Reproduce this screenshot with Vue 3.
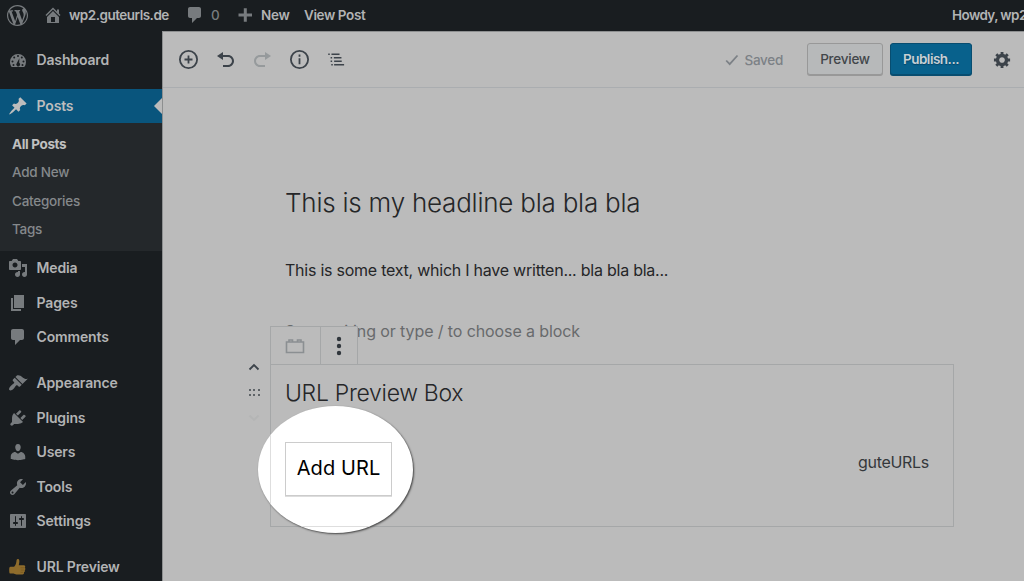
<script setup>
const paths = {
  wp: 'M20 10c0-5.51-4.49-10-10-10C4.48 0 0 4.49 0 10c0 5.52 4.48 10 10 10 5.51 0 10-4.48 10-10zM7.78 15.37L4.37 6.22c.55-.02 1.17-.08 1.17-.08.5-.06.44-1.13-.06-1.11 0 0-1.45.11-2.37.11-.18 0-.37 0-.58-.01C4.12 2.69 6.87 1.11 10 1.11c2.33 0 4.45.87 6.05 2.34-.68-.11-1.65.39-1.65 1.58 0 .74.45 1.36.9 2.1.35.61.55 1.36.55 2.46 0 1.49-1.4 5-1.4 5l-3.03-8.37c.54-.02.82-.17.82-.17.5-.05.44-1.25-.06-1.22 0 0-1.44.12-2.38.12-.87 0-2.33-.12-2.33-.12-.5-.03-.56 1.2-.06 1.22l.92.08 1.26 3.41zM17.41 10c.24-.64.74-1.87.43-4.25.7 1.29 1.05 2.71 1.05 4.25 0 3.29-1.73 6.24-4.4 7.78.97-2.59 1.94-5.2 2.92-7.78zM6.1 18.09C3.12 16.65 1.11 13.53 1.11 10c0-1.3.23-2.48.72-3.59C3.25 10.3 4.67 14.2 6.1 18.09zm4.03-6.63l2.58 6.98c-.86.29-1.76.45-2.71.45-.79 0-1.57-.11-2.29-.33.81-2.38 1.62-4.74 2.42-7.1z',
  home: 'M16 8.5l1.53 1.53-1.06 1.06L10 4.6l-6.47 6.49-1.06-1.06L10 2.5l4 4v-2h2v4zm-6-2.46l6 5.99V18H4v-5.97zM12 17v-5H8v5h4z',
  comments: 'M5 2h9c1.1 0 2 .9 2 2v7c0 1.1-.9 2-2 2h-2l-5 5v-5H5c-1.1 0-2-.9-2-2V4c0-1.1.9-2 2-2z',
  plus: 'M17 8.5v3h-5.2v5.2h-3v-5.2H3.500v-3h5.300V3.300h3v5.200z',
  dashboard: 'M3.76 17h12.48A7.950 7.950 0 0 0 18 12a8 8 0 1 0-16 0c0 1.890.660 3.630 1.760 5zM10 5a1 1 0 1 1 0 2 1 1 0 0 1 0-2zM6.200 6.500a1 1 0 1 1 0 2 1 1 0 0 1 0-2zM13.800 6.500a1 1 0 1 1 0 2 1 1 0 0 1 0-2zM4.500 10.500a1 1 0 1 1 0 2 1 1 0 0 1 0-2zM15.500 10.500a1 1 0 1 1 0 2 1 1 0 0 1 0-2zM11.400 8.200l-.2 4.600a1.900 1.900 0 1 1-2.300.3zM5.500 14a1 1 0 1 1 0 2 1 1 0 0 1 0-2zM14.500 14a1 1 0 1 1 0 2 1 1 0 0 1 0-2z',
  posts: 'M10.44 3.02l1.82-1.82 6.36 6.35-1.83 1.82c-1.05-.68-2.48-.57-3.41.36l-.75.75c-.92.93-1.04 2.35-.35 3.41l-1.83 1.82-2.41-2.41-2.8 2.79c-.42.42-3.38 2.71-3.8 2.29s1.86-3.39 2.28-3.81l2.79-2.79L4.1 9.36l1.83-1.82c1.05.69 2.48.57 3.4-.36l.75-.75c.93-.92 1.05-2.35.36-3.41z',
  media: 'M13 11V4c0-.55-.45-1-1-1h-1.67L9 1H5L3.67 3H2c-.55 0-1 .45-1 1v7c0 .55.45 1 1 1h10c.55 0 1-.45 1-1zM7 4.5c1.38 0 2.5 1.12 2.5 2.5S8.380 9.500 7 9.500 4.500 8.380 4.500 7 5.620 4.500 7 4.500zM14 6h5v10.500c0 1.380-1.120 2.500-2.500 2.500S14 17.880 14 16.500s1.120-2.500 2.500-2.500c.17 0 .34.02.5.05V9h-3V6zm-4 8.05V13h2v3.500c0 1.380-1.120 2.500-2.500 2.500S7 17.880 7 16.500 8.120 14 9.500 14c.17 0 .34.02.5.05z',
  pages: 'M6 15V2h10v13H6zm-1 1h8v2H3V5h2v11z',
  appearance: 'M14.48 11.06L7.41 3.99l1.5-1.5c.5-.56 2.3-.47 3.51.32 1.21.8 1.43 1.28 2.91 2.1 1.18.64 2.45 1.26 4.45.85zm-.71.71L6.7 4.7 4.93 6.47c-.39.39-.39 1.02 0 1.41l1.06 1.06c.39.39.39 1.03 0 1.42-.6.6-1.43 1.11-2.21 1.69-.35.26-.7.53-1.01.84C1.43 14.23.4 16.08 1.4 17.07c.99 1 2.84-.03 4.18-1.36.31-.31.58-.66.85-1.02.57-.78 1.08-1.61 1.69-2.21.39-.39 1.02-.39 1.41 0l1.06 1.06c.39.39 1.02.39 1.41 0z',
  plugins: 'M13.11 4.36L9.87 7.6 8 5.73l3.24-3.24c.35-.34 1.05-.2 1.56.32.52.51.66 1.21.31 1.55zm-8 1.77l.91-1.12 9.01 9.01-1.19.84c-.71.71-2.63 1.16-3.82 1.16H6.14L4.9 17.26c-.59.59-1.54.59-2.12 0-.59-.58-.59-1.53 0-2.12l1.24-1.24v-3.88c0-1.13.4-3.19 1.09-3.89zm7.26 3.97l3.24-3.24c.34-.35 1.04-.21 1.55.31.52.51.66 1.21.31 1.55l-3.24 3.25z',
  users: 'M10 9.25c-2.27 0-2.73-3.44-2.73-3.44C7 4.02 7.82 2 9.97 2c2.16 0 2.98 2.02 2.71 3.81 0 0-.41 3.44-2.68 3.44zm0 2.57L12.72 10c2.39 0 4.52 2.33 4.52 4.53v2.49s-3.65 1.13-7.24 1.13c-3.65 0-7.24-1.13-7.24-1.13v-2.49c0-2.25 1.94-4.48 4.47-4.48z',
  tools: 'M16.68 9.77c-1.34 1.34-3.3 1.67-4.95.99l-5.41 6.52c-.99.99-2.59.99-3.58 0s-.99-2.59 0-3.57l6.52-5.42c-.68-1.65-.35-3.61.99-4.95 1.28-1.28 3.12-1.62 4.72-1.06l-2.89 2.89 2.82 2.82 2.86-2.87c.53 1.58.18 3.39-1.08 4.65zM3.81 16.21c.4.39 1.04.39 1.43 0 .4-.4.4-1.04 0-1.43-.39-.4-1.03-.4-1.43 0-.39.39-.39 1.03 0 1.43z',
  settings: 'M18 16V4c0-.55-.45-1-1-1H3c-.55 0-1 .45-1 1v12c0 .55.45 1 1 1h14c.55 0 1-.45 1-1zM8 11h1c.55 0 1 .45 1 1s-.45 1-1 1H8v1.5c0 .28-.22.5-.5.5s-.5-.22-.5-.5V13H6c-.55 0-1-.45-1-1s.45-1 1-1h1V5.5c0-.28.22-.5.5-.5s.5.22.5.5V11zm5-2h-1c-.55 0-1-.45-1-1s.45-1 1-1h1V5.5c0-.28.22-.5.5-.5s.5.22.5.5V7h1c.55 0 1 .45 1 1s-.45 1-1 1h-1v5.5c0 .28-.22.5-.5.5s-.5-.22-.5-.5V9z',
  gear: 'M18 12h-2.18c-.17.7-.44 1.35-.81 1.93l1.54 1.54-2.1 2.1-1.54-1.54c-.58.36-1.23.63-1.91.79V19H8v-2.18c-.68-.16-1.33-.43-1.91-.79l-1.54 1.54-2.12-2.12 1.54-1.54c-.36-.58-.63-1.23-.79-1.91H1V9.03h2.17c.16-.7.44-1.35.8-1.94L2.43 5.55l2.1-2.1 1.54 1.54c.58-.37 1.24-.64 1.93-.81V2h3v2.18c.68.16 1.33.43 1.91.79l1.54-1.54 2.12 2.12-1.54 1.54c.36.59.64 1.24.8 1.94H18V12zm-8.5 1.5c1.66 0 3-1.34 3-3s-1.34-3-3-3-3 1.34-3 3 1.34 3 3 3z',
  undo: 'M12 5H7V2L1 6l6 4V7h5c2.2 0 4 1.8 4 4s-1.8 4-4 4H7v2h5c3.3 0 6-2.7 6-6s-2.7-6-6-6z',
  redo: 'M8 5h5V2l6 4-6 4V7H8c-2.2 0-4 1.8-4 4s1.8 4 4 4h5v2H8c-3.3 0-6-2.7-6-6s2.7-6 6-6z'
}
const subItems = ['All Posts', 'Add New', 'Categories', 'Tags']
const groups = [
  [['media', 'Media'], ['pages', 'Pages'], ['comments', 'Comments']],
  [['appearance', 'Appearance'], ['plugins', 'Plugins'], ['users', 'Users'], ['tools', 'Tools'], ['settings', 'Settings']]
]
</script>

<template>
  <div class="screen">
    <header class="adminbar">
      <svg class="ico wp" viewBox="0 0 20 20"><path :d="paths.wp" /></svg>
      <svg class="ico home" viewBox="0 0 20 20"><path :d="paths.home" /></svg>
      <span class="site">wp2.guteurls.de</span>
      <svg class="ico bubble" viewBox="0 0 20 20"><path :d="paths.comments" /></svg>
      <span class="count">0</span>
      <svg class="ico add" viewBox="0 0 20 20"><path :d="paths.plus" /></svg>
      <span class="new">New</span>
      <span class="view">View Post</span>
      <span class="howdy">Howdy, wp2</span>
    </header>

    <div class="body">
      <nav class="sidebar">
        <div class="item first">
          <svg class="ico" viewBox="0 0 20 20"><path fill-rule="evenodd" :d="paths.dashboard" /></svg>
          <span>Dashboard</span>
        </div>
        <div class="item current">
          <svg class="ico" viewBox="0 0 20 20"><path :d="paths.posts" /></svg>
          <span>Posts</span>
        </div>
        <div class="submenu">
          <span v-for="(s, i) in subItems" :key="s" :class="{ on: i === 0 }">{{ s }}</span>
        </div>
        <div v-for="(g, i) in groups" :key="i" class="group">
          <div v-for="m in g" :key="m[1]" class="item">
            <svg class="ico" viewBox="0 0 20 20"><path fill-rule="evenodd" :d="paths[m[0]]" /></svg>
            <span>{{ m[1] }}</span>
          </div>
        </div>
        <div class="item">
          <svg class="ico thumb" viewBox="0 0 20 20">
            <path d="M2.500 9.800h3.600c2-1.600 2.100-4.200 2.500-6.700.3-1.600 2.400-1.300 2.700.4.300 1.800-.4 3.300-.5 4.700h4.900c1.700 0 2 2 1 2.500 1 .6.900 2-.1 2.400.7.800.4 1.900-.6 2.200.3 1.200-.3 2.200-1.600 2.200H8.500c-1.300 0-2.200-.5-3-.9h-3c-1 0-1.300-.9-1.300-3.400s.3-3.400 1.300-3.400z" />
            <path class="crease" d="M12.500 10.800h3.800M12.700 13.100h3.300M12.500 15.300h2.800" />
          </svg>
          <span>URL Preview</span>
        </div>
      </nav>

      <main class="editor">
        <div class="toolbar">
          <svg class="tool t-insert" viewBox="0 0 20 20"><circle cx="10" cy="10" r="8.200" /><path d="M10 6.200v7.600M6.200 10h7.600" /></svg>
          <svg class="ico tfill" viewBox="0 0 20 20"><path :d="paths.undo" /></svg>
          <svg class="ico tfill faded" viewBox="0 0 20 20"><path :d="paths.redo" /></svg>
          <svg class="tool t-info" viewBox="0 0 20 20"><circle cx="10" cy="10" r="8.200" /><path d="M10 8.800v5.700M10 5.300v2" /></svg>
          <svg class="tool t-list" viewBox="0 0 20 20"><path d="M4.700 4.500h8.500M7.200 8.200h8M7.500 11.900h8M7.500 15.500H18M1.300 4.500h1.600M3.800 8.200h1.600M3.800 11.900h1.600M4.500 15.500h1.600" /></svg>
          <div class="saved">
            <svg viewBox="0 0 14 12"><path d="M1.200 6.500l3.500 3.700L12.500 1.500" /></svg>
            <span>Saved</span>
          </div>
          <button class="btn preview">Preview</button>
          <button class="btn publish">Publish...</button>
          <svg class="ico gear" viewBox="0 0 20 20"><path :d="paths.gear" /></svg>
        </div>

        <div class="content">
          <h1><span>This is my headline bla bla bla</span></h1>
          <p class="para"><span>This is some text, which I have written... bla bla bla...</span></p>
          <p class="hint"><span>Start writing or type / to choose a block</span></p>

          <section class="block">
            <div class="block-tools">
              <div class="cell brick">
                <svg viewBox="0 0 20 16"><path d="M1.500 4h17v10.500h-17zM4 4V2h3.500v2M12.500 4V2H16v2" /></svg>
              </div>
              <div class="cell">
                <svg class="dots" viewBox="0 0 6 20"><circle cx="3" cy="3" r="2.200" /><circle cx="3" cy="10" r="2.200" /><circle cx="3" cy="17" r="2.200" /></svg>
              </div>
            </div>
            <div class="mover">
              <svg class="chev" viewBox="0 0 12 8"><path d="M1.500 6.500L6 2l4.500 4.500" /></svg>
              <div class="grip"><i v-for="n in 6" :key="n" /></div>
              <svg class="chev down" viewBox="0 0 12 8"><path d="M1.500 1.500L6 6l4.500-4.500" /></svg>
            </div>
            <h2><span>URL Preview Box</span></h2>
            <span class="brand">guteURLs</span>
            <div class="spotlight">
              <div class="edge"></div>
              <button class="addurl"><span>Add URL</span></button>
            </div>
          </section>
        </div>
      </main>
    </div>
  </div>
</template>

<style>
html, body { margin: 0; overflow: hidden; }
</style>

<style scoped>
* { box-sizing: border-box; }
.screen { width: 1024px; height: 581px; overflow: hidden; background: #bbb; font-family: Inter, "Liberation Sans", sans-serif; }
.ico { width: 20px; height: 20px; flex: none; fill: #777b7e; }
.adminbar { height: 31px; background: #191d20; display: flex; align-items: center; color: #b2b3b4; font-size: 13.500px; font-weight: 600; white-space: nowrap; }
.adminbar span { line-height: 30px; height: 31px; }
.wp { width: 21px; height: 21px; margin-left: 7px; margin-top: -1px; }
.home { margin-left: 15px; margin-top: -1px; }
.site { width: 101px; margin-left: 6px; letter-spacing: -.5px; }
.bubble { margin-left: 15px; margin-top: -1px; }
.adminbar .count { margin-left: 6px; width: 9px; color: #777b7e; font-weight: 500; }
.add { margin-left: 15px; margin-top: -1px; }
.new { width: 28px; margin-left: 6px; letter-spacing: -.3px; }
.view { margin-left: 15px; letter-spacing: -.4px; }
.howdy { margin-left: auto; width: 72px; letter-spacing: -.6px; }
.body { display: flex; height: 550px; }
.sidebar { width: 162px; flex: none; background: #191d20; display: flex; flex-direction: column; }
.item { height: 34.500px; flex: none; display: flex; align-items: center; padding-left: 8px; gap: 8.500px; color: #b2b3b4; font-size: 14px; font-weight: 600; letter-spacing: -.15px; white-space: nowrap; }
.item span { position: relative; top: -.600px; }
.item.first { margin-top: 12px; margin-bottom: 11.500px; }
.item.current { height: 34px; background: #09557d; color: #bdbdbd; position: relative; }
.item.current .ico { fill: #bdbdbd; }
.item.current::after { content: ""; position: absolute; right: 0; top: 9px; border: 8px solid transparent; border-left-width: 0; border-right-color: #bbb; }
.submenu { height: 128px; flex: none; background: #24282b; padding: 7px 0 0 12px; display: flex; flex-direction: column; }
.submenu span { height: 28.250px; line-height: 28.250px; font-size: 13.500px; font-weight: 500; color: #85898c; letter-spacing: -.25px; }
.submenu .on { font-weight: 700; color: #c0c0c0; letter-spacing: -.35px; }
.group { margin-bottom: 11.500px; }
.thumb { fill: #8e6c2c; }
.crease { fill: none; stroke: #6e5019; stroke-width: .6; }
.editor { flex: 1; min-width: 0; background: #bbb; border-left: 1px solid #8d8f90; border-top: 1px solid #8d8f90; }
.toolbar { height: 56px; border-bottom: 1px solid #aaadb0; display: flex; align-items: center; padding-left: 15px; }
.tool { fill: none; stroke: #3c434a; stroke-width: 1.700; flex: none; }
.tfill { fill: #3c434a; margin-left: 17px; }
.t-insert { width: 21px; height: 21px; }
.tfill.faded { fill: #969a9c; margin-left: 16px; }
.t-info { width: 21px; height: 21px; margin-left: 16.500px; }
.t-list { width: 19px; height: 19px; margin-left: 17px; stroke-width: 1.500; }
.saved { margin-left: auto; display: flex; align-items: center; gap: 6px; color: #7c8186; font-size: 13.500px; font-weight: 500; margin-right: 24px; letter-spacing: -.3px; }
.saved svg { width: 14px; height: 12px; fill: none; stroke: #7c8186; stroke-width: 1.800; }
.btn { height: 32px; margin-top: -1px; border-radius: 3px; font-family: inherit; font-size: 13.500px; padding: 0; letter-spacing: -.25px; flex: none; }
.preview { width: 76px; border: 1px solid #989898; background: #b7b9ba; color: #42464a; font-weight: 500; box-shadow: 0 1px 0 #989898; margin-right: 7px; }
.publish { width: 82px; border: 1px solid #084d70; background: #08618c; color: #c8d0d4; font-weight: 600; box-shadow: 0 1px 0 #084d70; text-shadow: 0 1px 1px #064467; letter-spacing: -.5px; }
.gear { margin: 0 12px 0 21px; width: 19px; height: 19px; fill: #3c434a; }
.content { padding-left: 107px; color: #252628; }
h1, h2, p { margin: 0; font-weight: 300; white-space: nowrap; }
h1 { margin: 94px 0 0 15px; height: 42px; line-height: 42px; font-size: 26px; letter-spacing: -.230px; }
.para { margin: 33px 0 0 15px; height: 26px; line-height: 26px; font-size: 16px; font-weight: 400; letter-spacing: -.240px; }
.hint { margin: 35px 0 0 15px; height: 26px; line-height: 26px; font-size: 16px; font-weight: 400; letter-spacing: -.1px; color: #686a6c; }
.block { margin-top: 20px; width: 684px; height: 163px; border: 1px solid #a5a7a8; position: relative; display: flex; justify-content: space-between; padding: 14px 24px 0 14px; }
h2 { font-size: 23px; line-height: 28px; height: 28px; letter-spacing: -.3px; }
.brand { font-size: 16px; line-height: 24px; height: 24px; margin-top: 71px; color: #35383b; letter-spacing: -.3px; }
.block-tools { position: absolute; left: -1px; top: -39px; width: 88px; height: 39px; display: flex; background: #bbb; border: 1px solid #a5a7a8; }
.cell { flex: 1; display: flex; align-items: center; justify-content: center; padding-right: 1px; }
.cell.brick { flex: none; width: 50px; border-right: 1px solid #a5a7a8; padding-right: 2px; }
.brick svg { width: 20px; height: 16px; fill: none; stroke: #8b8f92; stroke-width: 1.600; }
.dots { width: 6px; height: 20px; fill: #30363c; }
.mover { position: absolute; left: -24px; top: -2px; width: 14px; display: flex; flex-direction: column; align-items: center; }
.chev { width: 12px; height: 8px; fill: none; stroke: #3c434a; stroke-width: 1.800; }
.chev.down { stroke: #b4b5b5; margin-top: 18px; }
.grip { display: grid; grid-template-columns: repeat(3, 2px); gap: 2.500px; margin-top: 18px; }
.grip i { width: 2px; height: 2px; border-radius: 1px; background: #41474d; }
.spotlight { position: absolute; left: -13px; top: 41px; width: 155px; height: 127px; border-radius: 50%; background: #fff; box-shadow: 1px 1px 2px #444; overflow: hidden; display: flex; align-items: flex-start; padding: 36px 0 0 27px; }
.edge { position: absolute; left: 12px; top: 0; width: 180px; height: 121px; border: solid #dedede; border-width: 0 0 1px 1px; }
.addurl { position: relative; width: 107px; height: 54px; padding: 0 0 2px; border: 1px solid #ccc; background: #fff; box-shadow: 0 1px 0 #ddd; color: #000; font-family: inherit; font-size: 20px; font-weight: 400; letter-spacing: .1px; }
</style>
